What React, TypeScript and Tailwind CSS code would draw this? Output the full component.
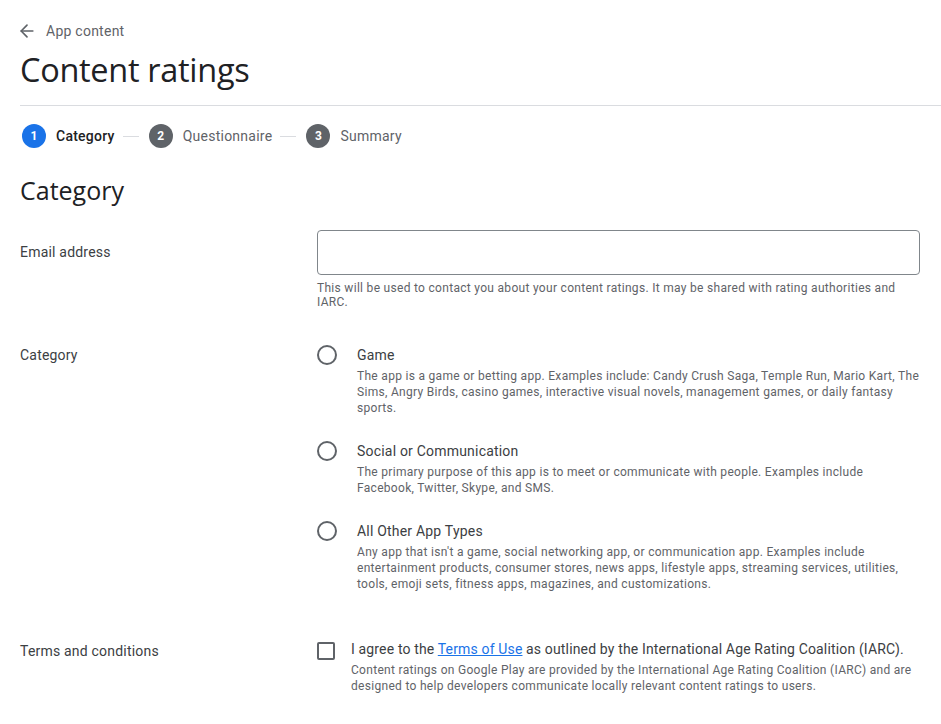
import { ArrowLeft } from 'lucide-react'

const body = { fontFamily: 'Roboto, "Liberation Sans", sans-serif' }
const display = { fontFamily: '"Open Sans", Roboto, sans-serif' }

const options = [
  {
    title: 'Game',
    desc: 'The app is a game or betting app. Examples include: Candy Crush Saga, Temple Run, Mario Kart, The Sims, Angry Birds, casino games, interactive visual novels, management games, or daily fantasy sports.',
  },
  {
    title: 'Social or Communication',
    desc: 'The primary purpose of this app is to meet or communicate with people. Examples include Facebook, Twitter, Skype, and SMS.',
  },
  {
    title: 'All Other App Types',
    desc: "Any app that isn't a game, social networking app, or communication app. Examples include entertainment products, consumer stores, news apps, lifestyle apps, streaming services, utilities, tools, emoji sets, fitness apps, magazines, and customizations.",
  },
]

function Step({ n, label, active }: { n: number; label: string; active?: boolean }) {
  return (
    <div className="flex items-center gap-[10px]">
      <div
        className={`w-6 h-6 rounded-full flex items-center justify-center text-white text-[12px] font-bold ${
          active ? 'bg-[#1a73e8]' : 'bg-[#5f6368]'
        }`}
      >
        {n}
      </div>
      <span
        className={`text-[14px] tracking-[0.25px] ${active ? 'text-[#202124] font-medium' : 'text-[#5f6368]'}`}
      >
        {label}
      </span>
    </div>
  )
}

export default function App() {
  return (
    <div className="bg-white min-h-screen text-[#202124]" style={body}>
      <div className="pl-5">
        {/* back link */}
        <div className="flex items-center gap-[9px] pt-[21px] h-[41px] text-[#5f6368]">
          <ArrowLeft size={20} strokeWidth={2} className="-ml-[3px]" />
          <span className="text-[14px] leading-5 tracking-[0.25px]">App content</span>
        </div>
        <h1 className="text-[32.5px] leading-[40px] mt-[9px] text-[#202124] tracking-[-0.3px]" style={display}>
          Content ratings
        </h1>
        <div className="h-px bg-[#dadce0] mt-[15px]" />

        {/* stepper */}
        <div className="flex items-center gap-2 mt-[18px] h-6 pl-[2px]">
          <Step n={1} label="Category" active />
          <div className="w-4 h-px bg-[#dadce0] mr-[2px]" />
          <Step n={2} label="Questionnaire" />
          <div className="w-4 h-px bg-[#dadce0] mr-[2px]" />
          <Step n={3} label="Summary" />
        </div>

        <h2 className="text-[25px] leading-8 mt-[26px] text-[#202124]" style={display}>
          Category
        </h2>

        {/* email */}
        <div className="grid grid-cols-[297px_603px] mt-[24px]">
          <div className="text-[14px] leading-5 pt-[12px] text-[#3c4043] tracking-[0.2px]">Email address</div>
          <div>
            <div className="h-[45px] border border-[#80868b] rounded-[4px]" />
            <p className="text-[12px] leading-[14px] text-[#5f6368] mt-[6px] tracking-[0.3px]">
              This will be used to contact you about your content ratings. It may be shared with rating authorities and IARC.
            </p>
          </div>
        </div>

        {/* category */}
        <div className="grid grid-cols-[297px_603px] mt-[36px]">
          <div className="text-[14px] leading-5 text-[#3c4043] tracking-[0.2px]">Category</div>
          <div className="flex flex-col gap-[25px]">
            {options.map(o => (
              <div key={o.title} className="flex gap-[20px]">
                <div className="w-5 h-5 rounded-full border-2 border-[#5f6368] shrink-0" />
                <div>
                  <div className="text-[14px] leading-5 text-[#3c4043] tracking-[0.2px]">{o.title}</div>
                  <p className="text-[12px] leading-4 text-[#5f6368] mt-[3px] tracking-[0.3px]">{o.desc}</p>
                </div>
              </div>
            ))}
          </div>
        </div>

        {/* terms */}
        <div className="grid grid-cols-[297px_603px] mt-[47px]">
          <div className="text-[14px] leading-5 pt-[2px] text-[#3c4043] tracking-[0.2px]">Terms and conditions</div>
          <div className="flex gap-4">
            <div className="w-[18px] h-[18px] border-2 border-[#5f6368] rounded-[2px] shrink-0 mt-[3px]" />
            <div>
              <div className="text-[14px] leading-5 text-[#3c4043] tracking-[0.15px]">
                I agree to the{' '}
                <a className="text-[#1a73e8] underline" href="#">
                  Terms of Use
                </a>{' '}
                as outlined by the International Age Rating Coalition (IARC).
              </div>
              <p className="text-[12px] leading-4 text-[#5f6368] mt-[3px] tracking-[0.3px]">
                Content ratings on Google Play are provided by the International Age Rating Coalition (IARC) and are designed to help developers communicate locally relevant content ratings to users.
              </p>
            </div>
          </div>
        </div>
      </div>
    </div>
  )
}
